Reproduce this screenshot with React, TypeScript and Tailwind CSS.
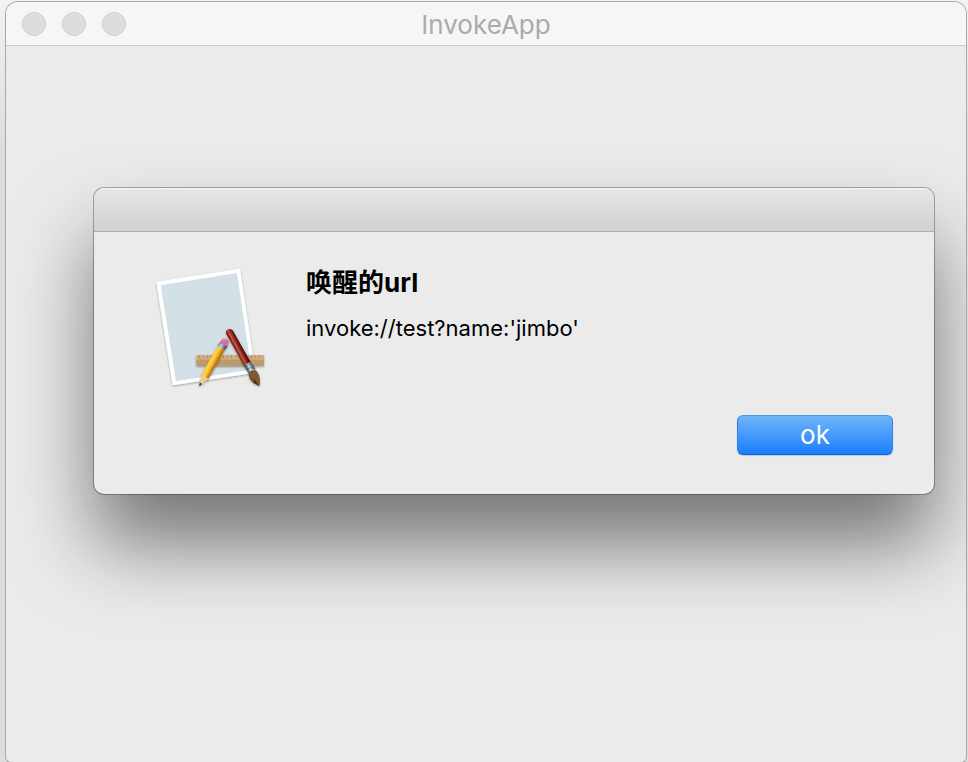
import React from "react";

function TrafficLights() {
  return (
    <div className="flex gap-4">
      {["Close", "Minimize", "Zoom"].map((label) => (
        <button
          key={label}
          type="button"
          aria-label={label}
          className="size-6 rounded-full border border-[#cbcbcb] bg-[#dddddd]"
        />
      ))}
    </div>
  );
}

function AppIcon() {
  return (
    <svg width="140" height="145" viewBox="0 0 420 435" className="shrink-0" aria-hidden="true">
      <defs>
        <linearGradient id="pencil" gradientUnits="userSpaceOnUse" x1="205" y1="310" x2="229" y2="323">
          <stop offset="0" stopColor="#f0a51c" />
          <stop offset="0.35" stopColor="#ffd34d" />
          <stop offset="0.65" stopColor="#fbc02f" />
          <stop offset="1" stopColor="#b8770f" />
        </linearGradient>
        <linearGradient id="handle" gradientUnits="userSpaceOnUse" x1="283" y1="281" x2="302" y2="271">
          <stop offset="0" stopColor="#5f130d" />
          <stop offset="0.4" stopColor="#c4553f" />
          <stop offset="0.6" stopColor="#a02c1d" />
          <stop offset="1" stopColor="#4d0e09" />
        </linearGradient>
        <linearGradient id="metal" gradientUnits="userSpaceOnUse" x1="318" y1="340" x2="342" y2="328">
          <stop offset="0" stopColor="#36434b" />
          <stop offset="0.4" stopColor="#d5e4ec" />
          <stop offset="0.65" stopColor="#72899a" />
          <stop offset="1" stopColor="#26333c" />
        </linearGradient>
        <linearGradient id="ferrule" gradientUnits="userSpaceOnUse" x1="234" y1="266" x2="258" y2="279">
          <stop offset="0" stopColor="#66717a" />
          <stop offset="0.4" stopColor="#dce8ed" />
          <stop offset="1" stopColor="#35414b" />
        </linearGradient>
        <linearGradient id="ruler" x1="0" y1="0" x2="0" y2="1">
          <stop offset="0" stopColor="#d2b288" />
          <stop offset="0.45" stopColor="#cba87b" />
          <stop offset="0.5" stopColor="#bf9a6c" />
          <stop offset="1" stopColor="#bd9869" />
        </linearGradient>
        <filter id="soft" x="-20%" y="-20%" width="140%" height="140%">
          <feDropShadow dx="0" dy="3" stdDeviation="3" floodOpacity="0.35" />
        </filter>
      </defs>
      <g filter="url(#soft)">
        <path d="M49 80 300 41 346 353 98 391Z" fill="#fff" />
        <path d="M62 91 291 54 334 344 108 379Z" fill="#d3e0e5" />
      </g>
      <g filter="url(#soft)">
        <path d="M169 300H372V333H169Z" fill="url(#ruler)" />
        <path
          d="M178 301v8M190 301v5M202 301v8M214 301v5M226 301v8M238 301v5M250 301v8M262 301v5M274 301v8M286 301v5M334 301v8M346 301v5M358 301v8"
          stroke="#94734a"
          strokeWidth="2"
        />
      </g>
      <g filter="url(#soft)">
        <path d="M184 359 232 274 254 286 205 372 190 379Z" fill="url(#pencil)" />
        <path d="M184 359 191 361 196 366 205 371 180 393 178 390Z" fill="#edca96" />
        <path d="M180 382 186 387 180 393 177 391Z" fill="#4a4035" />
        <path d="M232 274 240 261 263 273 254 286Z" fill="url(#ferrule)" />
        <path d="M236 269 258 281M239 264 261 276" stroke="#56646d" strokeWidth="1.5" />
        <path d="M240 263 244 255Q251 248 260 252 269 258 265 267L261 274Z" fill="#de6c98" />
        <path d="M246 256Q252 250 260 255" stroke="#efa0bf" strokeWidth="3" fill="none" />
      </g>
      <g filter="url(#soft)">
        <path d="M259 237Q256 226 264 223 274 219 279 227L332 321 312 332Z" fill="url(#handle)" />
        <path d="M268 233 318 321" stroke="#dc856b" strokeWidth="2" strokeDasharray="3 3" opacity="0.6" />
        <path d="M312 332 332 320 346 341 325 353Z" fill="url(#metal)" />
        <path d="M315 336 335 325M320 344 341 333" stroke="#2e3e48" strokeWidth="1.5" />
        <path d="M325 353Q333 345 346 345 354 351 357 361 362 376 358 393 348 389 339 383 327 373 325 353Z" fill="#75502b" />
        <path d="M331 354Q337 370 354 385M338 350Q343 367 356 380M346 349Q349 363 357 372" stroke="#a07846" strokeWidth="2" fill="none" />
        <path d="M342 371Q350 380 358 393L343 385Z" fill="#4b2d15" />
      </g>
    </svg>
  );
}

function AlertSheet() {
  return (
    <section
      role="alertdialog"
      aria-labelledby="alert-title"
      aria-describedby="alert-message"
      className="mr-8 ml-[88px] overflow-hidden rounded-[10px] bg-[#ebebeb] shadow-[0_0_0_1px_rgba(0,0,0,0.3),0_50px_80px_rgba(0,0,0,0.5)]"
    >
      <div className="h-11 border-t border-b border-t-[#f6f5f6] border-b-[#afadaf] bg-linear-to-b from-[#e8e6e8] to-[#d1cfd1]" />
      <div className="flex gap-[26px] pt-[23px] pl-[46px]">
        <AppIcon />
        <div className="pt-2 text-black">
          <h2 id="alert-title" className="text-[26px] leading-10 font-bold">
            唤醒的url
          </h2>
          <p id="alert-message" className="pt-2 text-[22px] leading-[34px]">
            invoke://test?name:'jimbo'
          </p>
        </div>
      </div>
      <div className="flex justify-end pt-[15px] pr-[41px] pb-[39px]">
        <button
          type="button"
          className="h-10 w-[156px] rounded-md border border-t-[#4b9bec] border-r-[#2e7fee] border-b-[#0a5ff0] border-l-[#2e7fee] bg-linear-to-b from-[#6db3f8] to-[#157efc] text-[26px] leading-9 text-white shadow-[0_1px_1px_rgba(0,0,0,0.15)]"
        >
          ok
        </button>
      </div>
    </section>
  );
}

export default function App() {
  return (
    <div className="flex min-h-screen flex-col bg-[#dcdcdc] bg-linear-to-b from-[#f2f2f2] to-[#dcdcdc] to-20% pt-[2px] pr-[2px] pl-[6px] font-[Inter,'Noto_Sans_CJK_SC',sans-serif]">
      <div className="flex flex-1 flex-col overflow-hidden rounded-t-[12px] rounded-b-[5px] bg-[#ebebeb] shadow-[0_0_0_1px_#a9a9a9]">
        <header className="grid h-11 grid-cols-[1fr_auto_1fr] items-center border-b border-[#cdcdcd] bg-[#f6f6f6] px-4">
          <TrafficLights />
          <h1 className="pt-[2px] text-[26px] leading-10 text-[#ababab]">InvokeApp</h1>
        </header>
        <main className="flex-1 pt-[142px]">
          <AlertSheet />
        </main>
      </div>
    </div>
  );
}
